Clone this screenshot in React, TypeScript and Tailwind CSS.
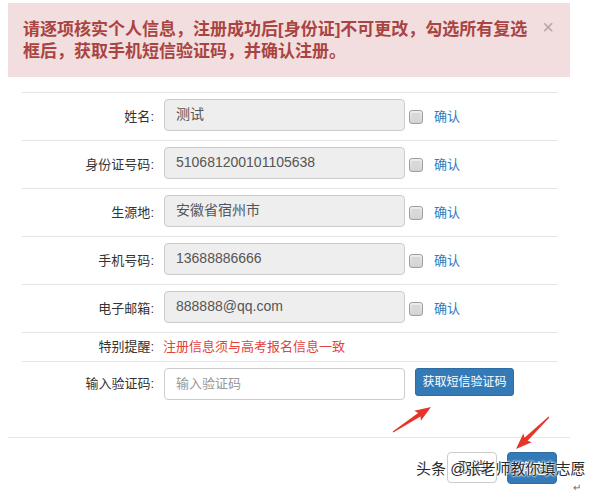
import React from "react";

const FONT = { fontFamily: '"Liberation Sans", "Noto Sans CJK SC", sans-serif' };

function arrowPoints(tx: number, ty: number, hx: number, hy: number) {
  const dx = hx - tx;
  const dy = hy - ty;
  const L = Math.hypot(dx, dy);
  const ux = dx / L;
  const uy = dy / L;
  const nx = -uy;
  const ny = ux;
  const headLen = 14;
  const nk = L - headLen;
  const p = (d: number, w: number) => `${(tx + ux * d + nx * w).toFixed(1)},${(ty + uy * d + ny * w).toFixed(1)}`;
  return [
    p(0, 0.6),
    p(nk, 2.2),
    p(nk - 2, 6),
    `${hx},${hy}`,
    p(nk - 2, -6),
    p(nk, -2.2),
    p(0, -0.6),
  ].join(" ");
}

function Checkbox() {
  return (
    <span className="ml-[4px] w-[14px] h-[14px] rounded-[3px] border border-[#a0a0a0] bg-gradient-to-b from-[#eeeeee] to-[#cfcfcf] shrink-0 flex items-center justify-center">
      <span className="w-[8px] h-[8px] bg-[#d8d8d8] rounded-[1px]" />
    </span>
  );
}

function Row({ label, value }: { label: string; value: string }) {
  return (
    <div className="h-[48px] border-t border-[#e6e6e6] flex items-center">
      <div className="w-[133px] text-right text-[13px] text-[#333] pr-[1px]">{label}:</div>
      <div className="ml-[9px] w-[241px] h-[32px] mb-[4px] bg-[#eeeeee] border border-[#cccccc] rounded-[4px] flex items-center pl-[11px] text-[14px] text-[#555]">
        {value}
      </div>
      <Checkbox />
      <span className="ml-[11px] text-[13px] text-[#337ab7]">确认</span>
    </div>
  );
}

export default function App() {
  const rows = [
    { label: "姓名", value: "测试" },
    { label: "身份证号码", value: "510681200101105638" },
    { label: "生源地", value: "安徽省宿州市" },
    { label: "手机号码", value: "13688886666" },
    { label: "电子邮箱", value: "888888@qq.com" },
  ];
  return (
    <div className="w-[600px] h-[493px] bg-white relative overflow-hidden" style={FONT}>
      <div className="ml-[8px] mt-[3px] w-[562px] h-[74px] bg-[#f2dede] flex justify-between pl-[15px] pt-[16px] pr-[16px]">
        <div className="text-[17px] leading-[22px] font-bold text-[#a94442] w-[510px]">
          请逐项核实个人信息，注册成功后[身份证]不可更改，勾选所有复选框后，获取手机短信验证码，并确认注册。
        </div>
        <div className="text-[20px] leading-[20px] text-[#b9a3a3] mt-[-2px]">×</div>
      </div>

      <div className="ml-[22px] mt-[15px] w-[536px]">
        {rows.map((r) => (
          <Row key={r.label} label={r.label} value={r.value} />
        ))}
        <div className="h-[29px] border-t border-[#e6e6e6] flex items-center">
          <div className="w-[133px] text-right text-[13px] text-[#333] pr-[1px]">特别提醒:</div>
          <div className="ml-[8px] text-[13px] text-[#e0443c]">注册信息须与高考报名信息一致</div>
        </div>
        <div className="h-[76px] border-t border-[#e6e6e6] flex items-start pt-[6px]">
          <div className="w-[133px] h-[32px] flex items-center justify-end text-[13px] text-[#333] pr-[1px]">输入验证码:</div>
          <div className="ml-[9px] w-[241px] h-[32px] bg-white border border-[#cccccc] rounded-[4px] flex items-center pl-[11px] text-[13px] text-[#999]">
            输入验证码
          </div>
          <button className="ml-[10px] w-[99px] h-[28px] bg-[#337ab7] border border-[#2e6da4] rounded-[3px] text-white text-[12px] flex items-center justify-center">
            获取短信验证码
          </button>
        </div>
      </div>

      <div className="ml-[8px] w-[562px] border-t border-[#e5e5e5] flex justify-end pr-[13px] pt-[14px] gap-[10px]">
        <button className="w-[50px] h-[31px] bg-white border border-[#cccccc] rounded-[4px] text-[14px] text-[#333] flex items-center justify-center">
          取消
        </button>
        <button className="w-[50px] h-[32px] bg-[#337ab7] border border-[#2e6da4] rounded-[4px] text-[14px] text-white flex items-center justify-center">
          确定
        </button>
      </div>

      <svg className="absolute left-0 top-0 pointer-events-none" width="600" height="493">
        <polygon points={arrowPoints(393, 432, 431, 407)} fill="#e8352b" />
        <polygon points={arrowPoints(549, 417, 516, 449)} fill="#e8352b" />
      </svg>

      <div className="absolute left-[416px] top-[457px] text-[15px] leading-[24px] text-[#2a2a2a] whitespace-nowrap [text-shadow:0_0_2px_#fff,0_0_2px_#fff,0_0_3px_#fff]">
        头条 @张老师教你填志愿
      </div>
      <div className="absolute left-[573px] top-[480px] text-[10px] text-[#666]">↵</div>
    </div>
  );
}
